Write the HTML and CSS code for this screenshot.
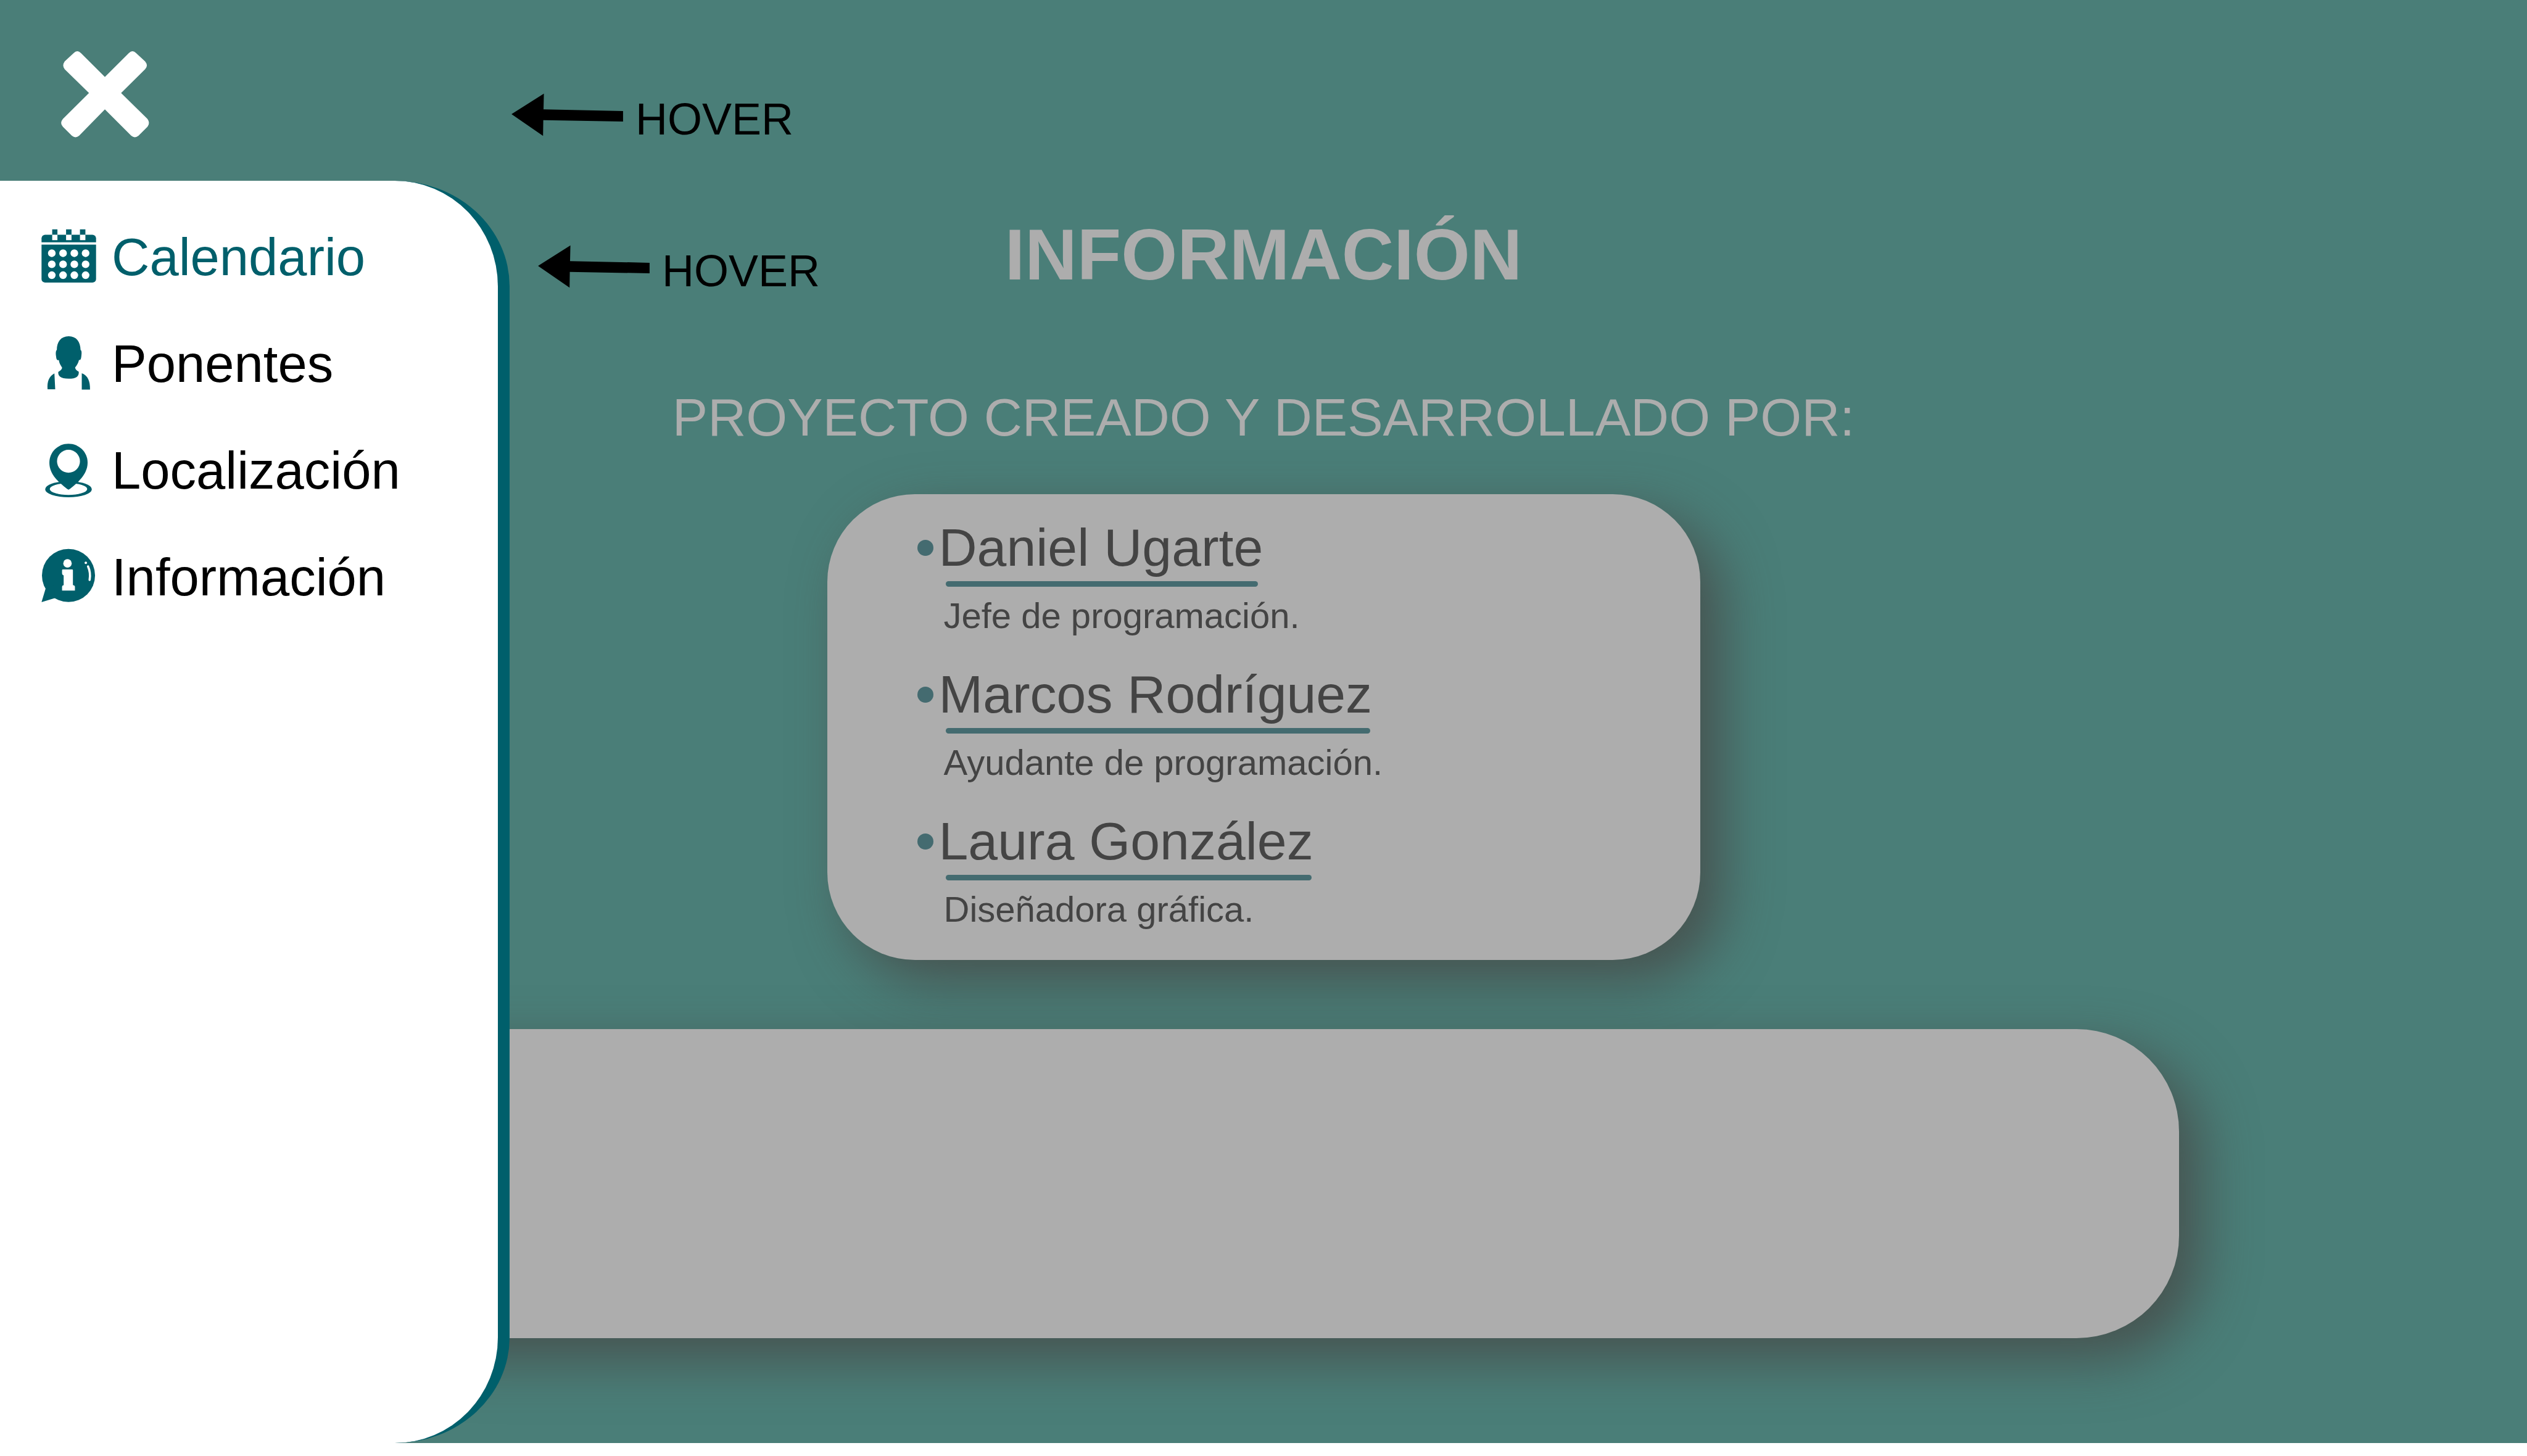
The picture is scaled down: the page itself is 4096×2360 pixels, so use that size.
FILE: index.html
```html
<!DOCTYPE html>
<html lang="es">
<head>
<meta charset="utf-8">
<meta name="viewport" content="width=device-width, initial-scale=1">
<title>Información</title>
<link rel="stylesheet" href="styles.css">
</head>
<body>
<div class="page">
  <header class="topbar">
    <button class="close" type="button" aria-label="Cerrar menú">
      <svg viewBox="102 85 147 144" aria-hidden="true"><path d="M175 128 L215 88 Q221 82 227 88 L242 102 Q248 109 242 115 L202 154.700 L246 198 Q251 205 246 211 L231 226 Q225 231 219 226 L175 182 L132 226 Q126 231 120 226 L105 211 Q99 205 105 198 L148.500 154.700 L108 115 Q103 109 108 102 L123 88 Q129 82 135 88 Z"/></svg>
    </button>
  </header>

  <main class="content">
    <h1 class="title">INFORMACIÓN</h1>
    <p class="subtitle">PROYECTO CREADO Y DESARROLLADO POR:</p>
    <section class="card card-team">
      <ul class="team">
        <li class="member">
          <div>
            <h2 class="name">Daniel Ugarte</h2>
            <p class="role">Jefe de programación.</p>
          </div>
        </li>
        <li class="member">
          <div>
            <h2 class="name">Marcos Rodríguez</h2>
            <p class="role">Ayudante de programación.</p>
          </div>
        </li>
        <li class="member">
          <div>
            <h2 class="name">Laura González</h2>
            <p class="role">Diseñadora gráfica.</p>
          </div>
        </li>
      </ul>
    </section>
    <section class="card card-wide"></section>
  </main>

  <nav class="drawer">
    <a class="item active" href="#calendario">
      <svg class="icon" viewBox="87 64 276 276" aria-hidden="true">
        <rect x="88" y="90" width="271" height="238" rx="18"/>
        <path d="M141 63h26v28h-26zM210 63h27v28h-27zM279 63h27v28h-27z"/>
        <path class="cut" d="M141 90h26v27h-26zM210 90h27v27h-27zM279 90h27v27h-27zM87 128h273v11H87z"/>
        <g class="cut">
          <circle cx="139" cy="182" r="19"/><circle cx="195" cy="182" r="19"/><circle cx="251" cy="182" r="19"/><circle cx="307" cy="182" r="19"/>
          <circle cx="139" cy="237" r="19"/><circle cx="195" cy="237" r="19"/><circle cx="251" cy="237" r="19"/><circle cx="307" cy="237" r="19"/>
          <circle cx="139" cy="291" r="19"/><circle cx="195" cy="291" r="19"/><circle cx="251" cy="291" r="19"/><circle cx="307" cy="291" r="19"/>
        </g>
      </svg>
      Calendario
    </a>
    <a class="item" href="#ponentes">
      <svg class="icon" viewBox="87 597 276 276" aria-hidden="true">
        <path d="M223 597C262 597 281 625 282 665C288 668 288 680 286 695C284 712 282 716 274 715C270 735 260 745 255 752C256 762 262 768 273 773C275 795 262 808 222 808C182 808 170 795 171 775C182 768 190 762 190 753C184 742 177 735 174 715C164 718 162 712 160 695C158 680 159 668 164 665C164 625 184 597 223 597Z"/>
        <path d="M152 782L156 861H118C115 822 125 797 152 782ZM288 781C318 792 330 820 329 862H288Z"/>
      </svg>
      Ponentes
    </a>
    <a class="item" href="#localizacion">
      <svg class="icon" viewBox="87 110 276 276" aria-hidden="true">
        <ellipse cx="222" cy="340" rx="116" ry="40"/>
        <ellipse class="cut" cx="222" cy="339" rx="93" ry="29"/>
        <path d="M222 114C274 114 317 155 317 208C317 250 290 282 270 303C250 322 232 337 222 342C212 337 194 322 174 303C150 280 127 250 127 208C127 155 170 114 222 114Z"/>
        <circle class="cut" cx="222" cy="201" r="57"/>
      </svg>
      Localización
    </a>
    <a class="item" href="#informacion">
      <svg class="icon" viewBox="87 642 276 276" aria-hidden="true">
        <circle cx="222" cy="770" r="132"/>
        <path d="M108 836L88 903L156 882L150 820Z"/>
        <circle class="cut" cx="217" cy="710" r="21"/>
        <path class="cut" d="M194 740H240Q244 740 244 744V816Q244 819 248 819Q254 820 254 826V845H190V826Q190 819 198 818V770Q190 767 190 760V744Q190 740 194 740Z"/>
        <circle class="cut" cx="308" cy="707" r="6"/>
        <path class="shine" d="M319 725C328 745 331 770 327 792"/>
      </svg>
      Información
    </a>
  </nav>

  <p class="note note-close">
    <svg class="arrow" viewBox="850 155 186 72" aria-hidden="true"><path d="M850 190L904 155.700L903.400 182L1036 184.700V202.300L903 200L902.600 226.300Z"/></svg>
    HOVER
  </p>
  <p class="note note-menu">
    <svg class="arrow" viewBox="850 155 186 72" aria-hidden="true"><path d="M850 190L904 155.700L903.400 182L1036 184.700V202.300L903 200L902.600 226.300Z"/></svg>
    HOVER
  </p>
</div>
</body>
</html>
```
FILE: styles.css
```css
* {
  box-sizing: border-box;
  margin: 0;
  padding: 0;
}

body {
  background: #fff;
  color: #000;
  font-family: "Liberation Sans", Arial, sans-serif;
  font-size: 86px;
  line-height: 100px;
}

.page {
  position: relative;
  overflow: hidden;
  background: #4a7e78;
}

.topbar {
  padding: 83px 99px 70px;
}

.close {
  display: block;
  width: 143px;
  height: 140px;
  border: 0;
  background: none;
  cursor: pointer;
}

.close svg {
  display: block;
  width: 100%;
  height: 100%;
  overflow: visible;
  fill: #fff;
}

/* Page content, dimmed while the menu is open */
.content {
  display: flex;
  flex-direction: column;
  align-items: center;
  padding: 60px 0 170px;
}

.title {
  color: #adadad;
  font-size: 117px;
  line-height: 120px;
}

.subtitle {
  margin: 153px 0 75px;
  color: #adadad;
}

.card {
  background: #adadad;
  box-shadow: 34px 34px 88px rgba(70, 62, 60, 0.68);
}

.card-team {
  width: 1415px;
  max-width: 90%;
  padding: 36px 146px 47px;
  border-radius: 142px;
}

.card-wide {
  width: 2968px;
  max-width: 90%;
  min-height: 501px;
  margin-top: 112px;
  border-radius: 166px;
}

.team {
  display: flex;
  flex-direction: column;
  gap: 42px;
  list-style: none;
}

.member {
  display: flex;
  gap: 9px;
  color: #444;
}

.member::before {
  content: "";
  width: 26px;
  height: 26px;
  margin-top: 38px;
  border-radius: 50%;
  background: #446b70;
}

.name {
  width: fit-content;
  font-size: 86px;
  font-weight: 400;
}

.name::after {
  content: "";
  display: block;
  height: 9px;
  margin: 5px 3px 0 11px;
  border-radius: 5px;
  background: #446b70;
}

.member:first-child .name::after {
  margin-right: 8px;
}

.role {
  margin-top: 12px;
  padding-left: 8px;
  font-size: 58px;
  line-height: 70px;
}

/* Slide-out menu */
.drawer {
  position: absolute;
  top: 293px;
  bottom: 0;
  left: 0;
  display: flex;
  flex-direction: column;
  gap: 73px;
  width: 826px;
  padding: 74px 0 74px 67px;
  border-right: 19px solid #005f6b;
  border-radius: 0 186px 186px 0 / 0 171px 171px 0;
  background: #fff;
  font-size: 85px;
}

.item {
  display: flex;
  align-items: center;
  gap: 24px;
  color: #000;
  text-decoration: none;
}

.item.active,
.item:hover {
  color: #005f6b;
}

.icon {
  width: 90px;
  height: 90px;
  overflow: visible;
  fill: #005f6b;
}

.cut {
  fill: #fff;
}

.shine {
  fill: none;
  stroke: #fff;
  stroke-width: 11;
  stroke-linecap: round;
}

/* Annotations laid over the page */
.note {
  position: absolute;
  display: flex;
  gap: 20px;
  font-size: 72px;
  line-height: 84px;
}

.note-close {
  top: 151px;
  left: 829px;
}

.note-menu {
  top: 397px;
  left: 872px;
}

.arrow {
  width: 181px;
  height: 70px;
}
```
